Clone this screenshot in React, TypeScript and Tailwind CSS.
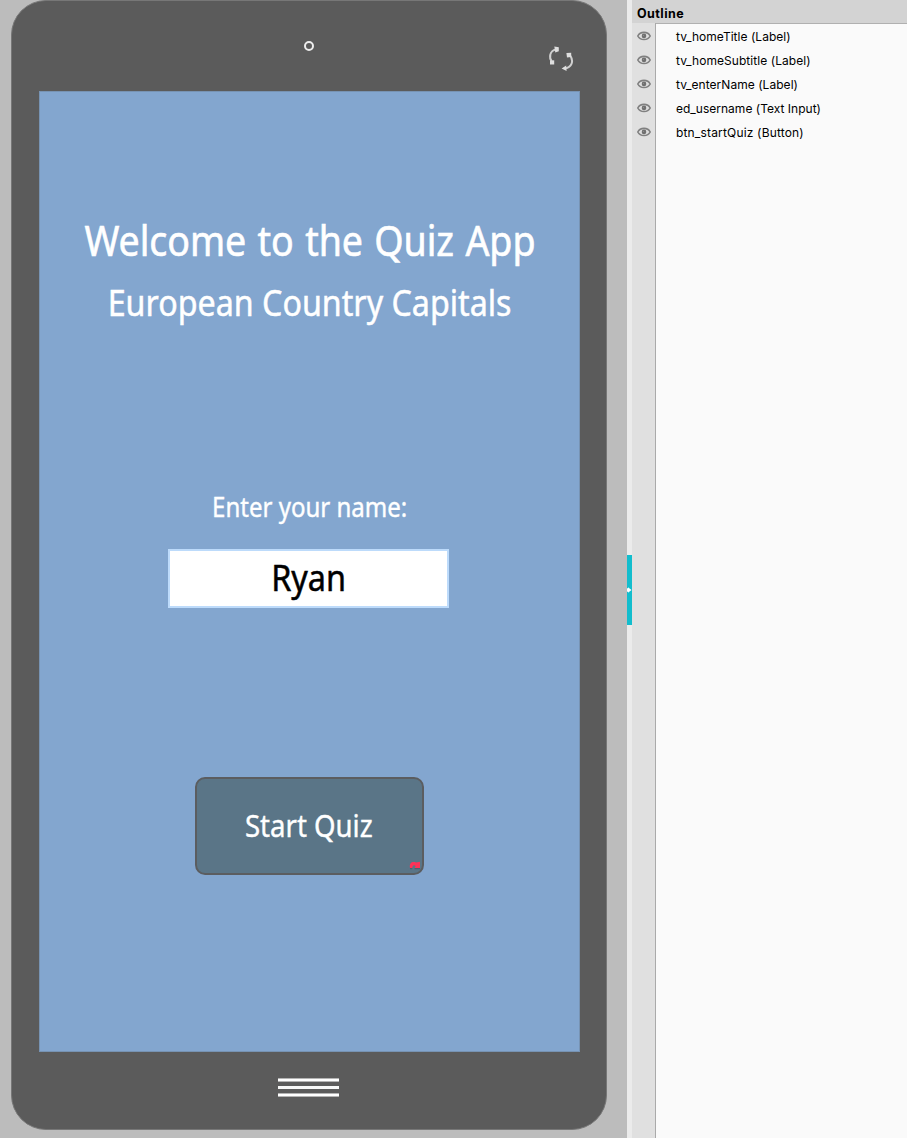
import React from "react";

const outline = [
  { name: "tv_homeTitle (Label)", spacing: "tracking-[.03px]" },
  { name: "tv_homeSubtitle (Label)", spacing: "tracking-[.06px]" },
  { name: "tv_enterName (Label)", spacing: "tracking-[.04px]" },
  { name: "ed_username (Text Input)", spacing: "tracking-[.01px]" },
  { name: "btn_startQuiz (Button)", spacing: "tracking-[.17px]" },
];

function Eye() {
  return (
    <svg width="14" height="10" viewBox="0 0 14 10" fill="none">
      <path d="M.8 5C3.2.1 10.8.1 13.2 5 10.8 9.7 3.2 9.7.8 5Z" fill="#dedede" stroke="#808080" strokeWidth="1.6" />
      <circle cx="7" cy="4.9" r="2.3" fill="#707070" />
      <circle cx="6.4" cy="4.4" r=".5" fill="#999" />
    </svg>
  );
}

function Rotate() {
  return (
    <svg width="26" height="26" viewBox="0 0 26 26" fill="none" stroke="#d0d0d0" strokeWidth="2">
      <path d="M4.2 16C.2 11 2 5 8 3.4" />
      <path d="M6.3.4 10.8 1.2 10.8 5.2 7.3 6.5ZM2 14.8 6.2 14.2 6.2 18.5 2 18.5Z" fill="#dedede" stroke="none" />
      <path d="M22 9.2C26.2 15.2 23.7 21 17 22.5" />
      <path d="M18.4 7 23.2 6.8 23.2 11 19 11.5ZM13.6 22.4 18.2 19.5 18.6 25Z" fill="#dedede" stroke="none" />
    </svg>
  );
}

export default function App() {
  return (
    <div className="flex h-[1138px] w-[907px] overflow-hidden bg-[#bcbcbc] font-['Noto_Sans',sans-serif]">
      <main className="w-[627px] shrink-0 pl-[11px]">
        <div className="flex h-[1130px] w-[596px] flex-col rounded-[35px] border border-[#777] bg-[#5b5b5b] px-[27px]">
          <header className="relative flex h-[90px] shrink-0 justify-center">
            <span className="mt-[40px] ml-[-1px] size-[10px] rounded-full border-2 border-[#eee]" />
            <div className="absolute top-[45px] right-[5px]"><Rotate /></div>
          </header>
          <section className="flex h-[961px] w-[541px] shrink-0 flex-col items-center border border-[#7793b3] bg-[#83a6cf] text-white">
            <h1 className="mt-[118px] h-[60px] origin-center scale-x-[.895] text-[42px] leading-[60px] tracking-[-.1px] [word-spacing:2px] whitespace-nowrap [-webkit-text-stroke:.6px_white]">Welcome to the Quiz App</h1>
            <h2 className="mt-[8px] h-[50px] origin-center scale-x-[.895] text-[36px] leading-[50px] whitespace-nowrap [-webkit-text-stroke:.5px_white]">European Country Capitals</h2>
            <label className="mt-[159px] h-[40px] origin-center scale-x-[.89] text-[27px] leading-[40px] whitespace-nowrap [-webkit-text-stroke:.4px_white]">Enter your name:</label>
            <div className="mt-[22px] mr-[2px] flex h-[59px] w-[281px] items-center justify-center border-2 border-[#bddbfb] bg-white text-black">
              <span className="mb-[2px] origin-center scale-x-[.9] text-[36px] leading-[50px] [-webkit-text-stroke:.5px_black]">Ryan</span>
            </div>
            <button className="relative mt-[169px] flex h-[98px] w-[229px] items-center justify-center rounded-[10px] border-2 border-[#5b5d60] bg-[#5a7587]">
              <span className="mr-px mb-[3px] origin-center scale-x-[.89] text-[31px] leading-[44px] whitespace-nowrap [-webkit-text-stroke:.4px_white]">Start Quiz</span>
              <svg className="absolute right-[1px] bottom-[3px]" width="12" height="9" viewBox="0 0 12 9">
                <path d="M1 7C0 1.5 3.5.2 7 1.5L11 .8V7H5.5L6.7 5C5 3.3 3.5 4.2 3.3 7Z" fill="#ff3158" />
                <path d="M1 7.7H3.3M5.5 7.7H11" stroke="#485e6b" />
              </svg>
            </button>
          </section>
          <div className="mt-[26px] ml-[239px] flex w-[61px] flex-col gap-[4px]">
            <span className="h-[4px] border-y border-[#b4b4b4] bg-white" />
            <span className="h-[3px] bg-[#f7f8f8]" />
            <span className="h-[4px] border-y border-[#b4b4b4] bg-white" />
          </div>
        </div>
      </main>
      <div className="w-[5px] shrink-0 bg-[#ebebeb] pt-[555px]">
        <div className="flex h-[70px] items-center bg-[#12bdcd]">
          <svg width="5" height="6" viewBox="0 0 5 6"><path d="M0 1.3H1V.3L4.5 3 1 5.7V4.7H0Z" fill="white" /></svg>
        </div>
      </div>
      <aside className="flex min-w-0 flex-1 flex-col bg-[#fafafa] font-['Inter',sans-serif] text-black">
        <header className="flex h-[23px] shrink-0 items-center bg-[#d3d3d3] pt-[4px] pl-[5px]">
          <span className="text-[12.5px] leading-[18px] font-bold tracking-[.45px]">Outline</span>
        </header>
        <div className="flex flex-1">
          <div className="flex w-[24px] shrink-0 flex-col items-center border-r border-[#aaa] bg-[#e0e0e0] pt-px">
            {outline.map(({ name }) => <div key={name} className="flex h-[24px] items-center"><Eye /></div>)}
          </div>
          <ul className="flex-1 border-t border-[#b0b0b0] pt-[2px] pl-[20px] text-[12px]">
            {outline.map(({ name, spacing }) => <li key={name} className={`h-[24px] leading-[22px] whitespace-nowrap ${spacing}`}>{name}</li>)}
          </ul>
        </div>
      </aside>
    </div>
  );
}
